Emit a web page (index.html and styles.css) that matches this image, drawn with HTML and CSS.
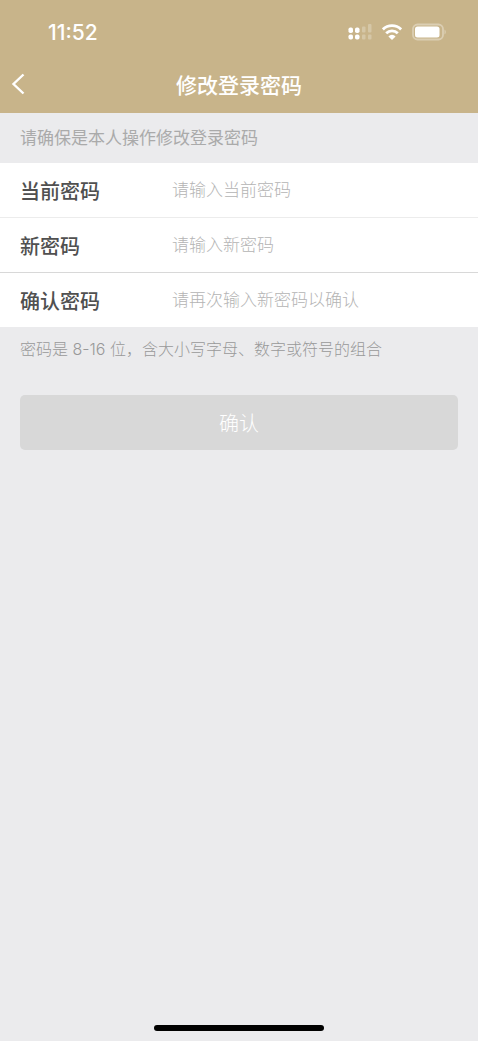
FILE: index.html
```html
<!DOCTYPE html>
<html lang="zh-CN">

<head>
    <meta charset="UTF-8">
    <meta name="viewport" content="width=device-width, initial-scale=1.0">
    <title>修改登录密码</title>
    <link rel="stylesheet" href="styles.css">
</head>

<body>
    <header class="header">
        <div class="status-bar">
            <span class="time">11:52</span>
            <div class="status-icons">
                <svg width="24" height="18" viewBox="0 0 24 18" fill="#fff">
                    <rect x="0.5" y="4.5" width="4.5" height="5.5" rx="1.8" />
                    <rect x="7" y="4.5" width="4.5" height="5.5" rx="1.8" />
                    <rect x="0.5" y="11.5" width="4.5" height="5" rx="1.8" />
                    <rect x="7" y="11.5" width="4.5" height="5" rx="1.8" />
                    <g opacity="0.25">
                        <rect x="14" y="3.5" width="3.5" height="6" rx="1" />
                        <rect x="20" y="1" width="3.5" height="8.5" rx="1" />
                        <rect x="14" y="11.5" width="3.5" height="5" rx="1" />
                        <rect x="20" y="11.5" width="3.5" height="5" rx="1" />
                    </g>
                </svg>
                <svg width="20" height="18" viewBox="0 0 20 18">
                    <path d="M0.9 6.4a13 13 0 0 1 18.2 0M4.2 10.2a8.2 8.2 0 0 1 11.6 0" fill="none" stroke="#fff"
                        stroke-width="2.8" />
                    <path d="M10 17l-3.6-3.6a5 5 0 0 1 7.2 0z" fill="#fff" />
                </svg>
                <svg width="34" height="18" viewBox="0 0 34 18">
                    <rect x="1" y="1.5" width="30" height="15" rx="4.5" fill="none" stroke="#fff" stroke-width="1.8"
                        opacity="0.35" />
                    <rect x="3" y="3.5" width="24.5" height="11" rx="2.5" fill="#fff" />
                    <path d="M32.5 6.5a3 3 0 0 1 0 5z" fill="#fff" opacity="0.35" />
                </svg>
            </div>
        </div>
        <div class="nav-bar">
            <button class="back" type="button" aria-label="返回">
                <svg width="14" height="22" viewBox="0 0 14 22">
                    <path d="M12.5 1.5L2.5 11l10 9.5" fill="none" stroke="#fff" stroke-width="2.4" />
                </svg>
            </button>
            <h1 class="title">修改登录密码</h1>
        </div>
    </header>

    <main>
        <form class="password-form">
            <p class="notice">请确保是本人操作修改登录密码</p>
            <div class="fields">
                <div class="field">
                    <label for="current">当前密码</label>
                    <input type="password" id="current" placeholder="请输入当前密码">
                </div>
                <div class="field">
                    <label for="new">新密码</label>
                    <input type="password" id="new" placeholder="请输入新密码">
                </div>
                <div class="field">
                    <label for="confirm">确认密码</label>
                    <input type="password" id="confirm" placeholder="请再次输入新密码以确认">
                </div>
            </div>
            <p class="hint">密码是 8-16 位，含大小写字母、数字或符号的组合</p>
            <button class="submit" type="submit" disabled>确认</button>
        </form>
    </main>

    <div class="home-indicator"></div>
</body>

</html>
```

FILE: styles.css
```css
* {
    box-sizing: border-box;
}

body {
    display: flex;
    flex-direction: column;
    min-height: 100vh;
    margin: 0;
    background-color: #ebebed;
    font-family: Inter, "Noto Sans CJK SC", sans-serif;
}

main {
    flex: 1;
}

.header {
    background-color: #c8b48a;
    color: #fff;
}

.status-bar {
    display: flex;
    justify-content: space-between;
    align-items: center;
    height: 58px;
    padding: 6px 32px 0 48px;
}

.time {
    font-size: 21px;
    font-weight: 500;
}

.status-icons {
    display: flex;
    gap: 10px;
}

.status-icons svg {
    display: block;
}

.nav-bar {
    display: grid;
    grid-template-columns: 48px 1fr 48px;
    align-items: center;
    height: 55px;
    padding-bottom: 3px;
}

.back {
    display: flex;
    padding: 0 11px;
    border: none;
    background: none;
}

.title {
    margin: 0;
    font-size: 21px;
    font-weight: 500;
    text-align: center;
}

.notice {
    margin: 0;
    padding: 0 20px;
    color: #aaa;
    font-size: 17px;
    font-weight: 400;
    line-height: 50px;
}

.fields {
    background-color: #fff;
}

.field {
    display: flex;
    align-items: center;
    height: 55px;
    padding: 0 20px;
    border-bottom: 1px solid #ececec;
}

.field:nth-child(2) {
    border-bottom-color: #d8d8d8;
}

.field:last-child {
    height: 54px;
    border-bottom: none;
}

.field label {
    width: 152px;
    color: #505050;
    font-size: 20px;
    font-weight: 500;
}

.field input {
    flex: 1;
    min-width: 0;
    padding: 0;
    border: none;
    outline: none;
    background: none;
    font-family: inherit;
    font-size: 17px;
    font-weight: 300;
}

.field input::placeholder {
    color: #b4b4b4;
}

.hint {
    margin: 0;
    padding: 0 20px;
    color: #999;
    font-size: 16px;
    font-weight: 300;
    line-height: 44px;
}

.submit {
    display: block;
    width: calc(100% - 40px);
    height: 55px;
    margin: 24px 20px 0;
    border: none;
    border-radius: 5px;
    background-color: #d8d8d8;
    color: #fff;
    font-family: inherit;
    font-size: 20px;
    font-weight: 300;
}

.home-indicator {
    width: 170px;
    height: 6px;
    margin: 0 auto 10px;
    border-radius: 3px;
    background-color: #000;
}
```
